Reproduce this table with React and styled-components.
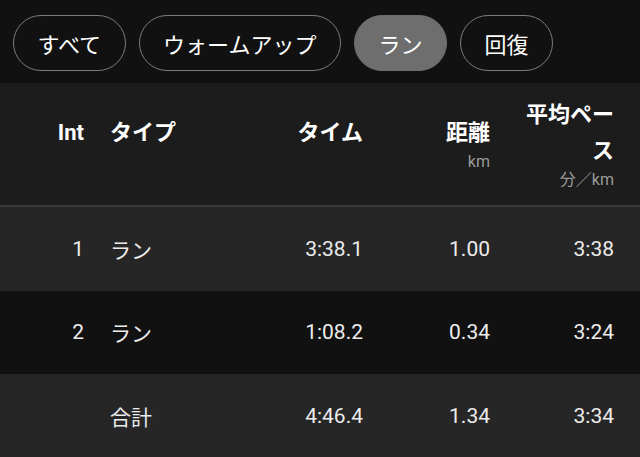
import React from "react";
import styled, { createGlobalStyle } from "styled-components";

const GlobalStyle = createGlobalStyle`
  html, body {
    margin: 0;
    padding: 0;
    background: #111111;
    font-family: Roboto, "Noto Sans CJK JP", sans-serif;
    color: #f2f2f2;
  }
`;

const filters = [
  { label: "すべて", active: false },
  { label: "ウォームアップ", active: false },
  { label: "ラン", active: true },
  { label: "回復", active: false },
];

const laps = [
  { int: "1", type: "ラン", time: "3:38.1", dist: "1.00", pace: "3:38" },
  { int: "2", type: "ラン", time: "1:08.2", dist: "0.34", pace: "3:24" },
];

const total = { int: "", type: "合計", time: "4:46.4", dist: "1.34", pace: "3:34" };

const App = () => {
  return (
    <Wrapper>
      <GlobalStyle />
      <FilterBar>
        {filters.map((f) => (
          <Chip key={f.label} $active={f.active}>
            {f.label}
          </Chip>
        ))}
      </FilterBar>
      <Table>
        <HeaderRow>
          <HeadCell $align="right" $pad>
            <HeadLabel>Int</HeadLabel>
            <Unit>&nbsp;</Unit>
          </HeadCell>
          <HeadCell $align="left">
            <HeadLabel>タイプ</HeadLabel>
            <Unit>&nbsp;</Unit>
          </HeadCell>
          <HeadCell $align="right">
            <HeadLabel>タイム</HeadLabel>
            <Unit>&nbsp;</Unit>
          </HeadCell>
          <HeadCell $align="right">
            <HeadLabel>距離</HeadLabel>
            <Unit>km</Unit>
          </HeadCell>
          <HeadCell $align="right">
            <HeadLabel>平均ペース</HeadLabel>
            <Unit>分／km</Unit>
          </HeadCell>
        </HeaderRow>
        {laps.map((lap, i) => (
          <Row key={lap.int} $dark={i % 2 === 1}>
            <Cell $align="right" $pad>{lap.int}</Cell>
            <Cell $align="left">{lap.type}</Cell>
            <Cell $align="right">{lap.time}</Cell>
            <Cell $align="right">{lap.dist}</Cell>
            <Cell $align="right">{lap.pace}</Cell>
          </Row>
        ))}
        <Row $dark={false}>
          <Cell $align="right" $pad>{total.int}</Cell>
          <Cell $align="left">{total.type}</Cell>
          <Cell $align="right">{total.time}</Cell>
          <Cell $align="right">{total.dist}</Cell>
          <Cell $align="right">{total.pace}</Cell>
        </Row>
      </Table>
    </Wrapper>
  );
};

const Wrapper = styled.div`
  width: 640px;
  height: 457px;
  overflow: hidden;
  background: #111111;
`;

const FilterBar = styled.div`
  display: flex;
  gap: 13px;
  height: 83px;
  box-sizing: border-box;
  padding: 15px 13px 0;
  background: #111111;
`;

const Chip = styled.div`
  display: flex;
  align-items: center;
  justify-content: center;
  box-sizing: border-box;
  height: 56px;
  padding: 0 23.5px;
  border-radius: 28px;
  font-size: 22px;
  color: #ffffff;
  border: 1.5px solid ${(p) => (p.$active ? "#6e6e6e" : "#7c7c7c")};
  background: ${(p) => (p.$active ? "#6e6e6e" : "transparent")};
`;

const Table = styled.div`
  display: flex;
  flex-direction: column;
`;

const grid = `
  display: grid;
  grid-template-columns: 86px 116px 113px 103px 100px;
  column-gap: 24px;
  padding-right: 26px;
  align-items: center;
`;

const HeaderRow = styled.div`
  ${grid}
  height: 122px;
  background: #1c1c1c;
  border-bottom: 2px solid #3a3a3a;
`;

const HeadCell = styled.div`
  display: flex;
  flex-direction: column;
  align-items: ${(p) => (p.$align === "right" ? "flex-end" : "flex-start")};
  text-align: ${(p) => p.$align};
  padding-right: ${(p) => (p.$pad ? "2px" : "0")};
`;

const HeadLabel = styled.div`
  font-size: 22px;
  font-weight: 700;
  line-height: 36px;
  color: #ffffff;
  max-width: 100px;
`;

const Unit = styled.div`
  font-size: 16px;
  line-height: 22px;
  color: #9a9a9a;
`;

const Row = styled.div`
  ${grid}
  height: 83.5px;
  background: ${(p) => (p.$dark ? "#111111" : "#262626")};
`;

const Cell = styled.div`
  font-size: 21px;
  color: #ececec;
  text-align: ${(p) => p.$align};
  padding-right: ${(p) => (p.$pad ? "2px" : "0")};
`;

export default App;
